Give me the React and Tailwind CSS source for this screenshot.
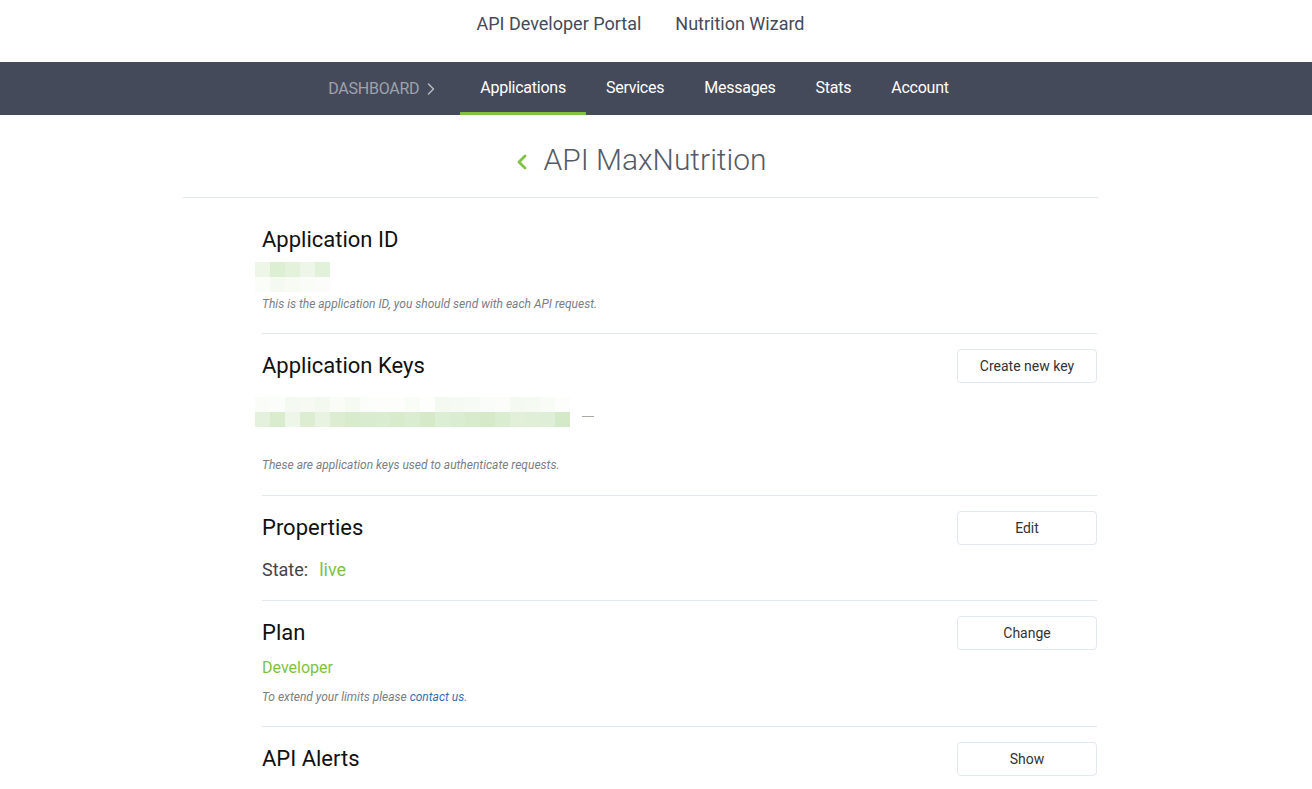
import { ChevronLeft, ChevronRight } from 'lucide-react'

const idBlocks = [
  ['#eef6e8', '#dcefd2', '#e4f2dc', '#eef6ea', '#e2f1d9'],
  ['#fbfdf9', '#f4faf1', '#f7fbf4', '#fafcf8', '#fcfdfb'],
]

const keyBlocks = [
  ['#f9fcf7', '#fbfdfa', '#f4f9f1', '#f6faf3', '#f4f9f0', '#fafcf8', '#f5faf2', '#fbfdfa', '#fdfefc', '#fdfefc', '#f9fcf7', '#fefefd', '#f4f9f1', '#f6faf4', '#f7fbf5', '#fafcf9', '#fcfdfb', '#f4f9f1', '#f5faf2', '#f8fbf6', '#fdfefc'],
  ['#e4f1dc', '#d9ecce', '#eef6ea', '#dcedd2', '#e8f3e2', '#dcedd2', '#d8ebcd', '#d9eccf', '#dbedd1', '#d8ebcd', '#dbedd1', '#d6eaca', '#dceed3', '#dbedd1', '#d8ebcd', '#d6eaca', '#dbedd1', '#e2f0da', '#e0efd8', '#dfeed6', '#d4e9c8'],
]

const Blur = ({ rows }) => (
  <div className="flex flex-col">
    {rows.map((row, i) => (
      <div key={i} className="flex">
        {row.map((c, j) => (
          <div key={j} className="w-[15px] h-[15px]" style={{ backgroundColor: c }} />
        ))}
      </div>
    ))}
  </div>
)

const Button = ({ children }) => (
  <button
    type="button"
    className="w-[140px] h-[34px] border border-[#e3e8ee] rounded-[4px] bg-white text-[14px] text-[#333333]"
  >
    {children}
  </button>
)

const Help = ({ children }) => (
  <p className="text-[12px] leading-[16px] italic text-[#7a7e85]">{children}</p>
)

const navItems = ['Applications', 'Services', 'Messages', 'Stats', 'Account']

export default function App() {
  return (
    <div className="min-h-screen bg-white" style={{ fontFamily: 'Roboto, "Noto Sans", sans-serif' }}>
      {/* top header */}
      <div className="w-[1281px] h-[62px] flex items-center justify-center gap-[34px] text-[18px] text-[#454a5a] pb-[16px]">
        <span>API Developer Portal</span>
        <span>Nutrition Wizard</span>
      </div>

      {/* nav */}
      <div className="w-full h-[53px] bg-[#454a5a]">
        <div className="w-[1281px] h-full flex justify-center pl-[16px] tracking-[-0.25px]">
          <div className="flex items-center text-[16px] text-[#9ea2ab] pr-[19px]">
            DASHBOARD
            <ChevronRight size={20} strokeWidth={1.8} className="ml-[2px] text-[#b7bac1]" />
          </div>
          {navItems.map(item => (
            <div
              key={item}
              className={`h-full flex items-center px-5 text-[16px] text-white border-b-[3px] ${
                item === 'Applications' ? 'border-[#7dc242]' : 'border-transparent'
              }`}
            >
              <span className="pt-[1px]">{item}</span>
            </div>
          ))}
        </div>
      </div>

      {/* title */}
      <div className="w-[1281px]">
        <div className="ml-[183px] w-[915px] border-b border-[#e3e8ee] pt-[25px] pb-[17px] flex items-center justify-center pr-[4px]">
          <ChevronLeft size={24} strokeWidth={2.8} className="text-[#7dc242] mr-[9px] mt-[3px]" />
          <h1 className="text-[30px] leading-[40px] font-light text-[#555b66]">API MaxNutrition</h1>
        </div>

        <div className="ml-[262px] w-[835px]">
          {/* Application ID */}
          <div className="pt-[27px] pb-[21px] border-b border-[#e3e8ee]">
            <h2 className="text-[22px] leading-[30px] text-[#111111]">Application ID</h2>
            <div className="mt-[7px] -ml-[7px]">
              <Blur rows={idBlocks} />
            </div>
            <div className="mt-[4px]">
              <Help>This is the application ID, you should send with each API request.</Help>
            </div>
          </div>

          {/* Application Keys */}
          <div className="pt-[15px] pb-[22px] border-b border-[#e3e8ee]">
            <div className="flex items-center justify-between">
              <h2 className="text-[22px] leading-[30px] text-[#111111]">Application Keys</h2>
              <Button>Create new key</Button>
            </div>
            <div className="mt-[14px] -ml-[7px] flex items-center">
              <Blur rows={keyBlocks} />
              <div className="ml-[12px] mt-[8px] w-[12px] h-[1px] bg-[#a9ab9f]" />
            </div>
            <div className="mt-[30px]">
              <Help>These are application keys used to authenticate requests.</Help>
            </div>
          </div>

          {/* Properties */}
          <div className="pt-[15px] pb-[18px] border-b border-[#e3e8ee]">
            <div className="flex items-center justify-between">
              <h2 className="text-[22px] leading-[30px] text-[#111111]">Properties</h2>
              <Button>Edit</Button>
            </div>
            <p className="mt-[13px] text-[18px] leading-[24px] text-[#444444]">
              State:<span className="ml-[11px] text-[#7dc242]">live</span>
            </p>
          </div>

          {/* Plan */}
          <div className="pt-[15px] pb-[21px] border-b border-[#e3e8ee]">
            <div className="flex items-center justify-between">
              <h2 className="text-[22px] leading-[30px] text-[#111111]">Plan</h2>
              <Button>Change</Button>
            </div>
            <p className="mt-[7px] text-[16px] leading-[22px] text-[#7dc242]">Developer</p>
            <div className="mt-[10px]">
              <Help>
                To extend your limits please <a href="#" className="text-[#2d72b8]">contact us</a>.
              </Help>
            </div>
          </div>

          {/* API Alerts */}
          <div className="pt-[15px] pb-[22px]">
            <div className="flex items-center justify-between">
              <h2 className="text-[22px] leading-[30px] text-[#111111]">API Alerts</h2>
              <Button>Show</Button>
            </div>
          </div>
        </div>
      </div>
    </div>
  )
}
